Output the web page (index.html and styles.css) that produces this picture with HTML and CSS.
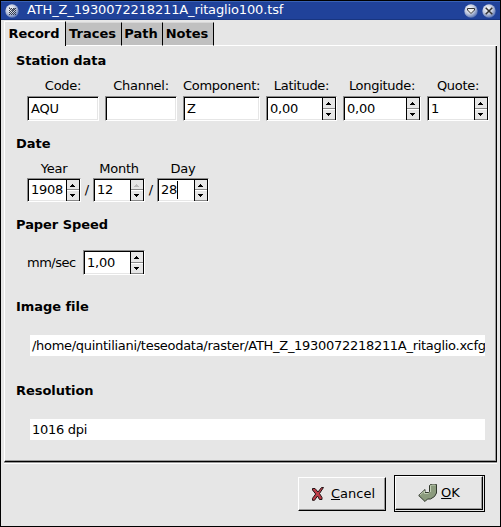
FILE: index.html
```html
<!DOCTYPE html>
<html lang="en">
<head>
<meta charset="utf-8">
<title>ATH_Z_1930072218211A_ritaglio100.tsf</title>
<link rel="stylesheet" href="styles.css">
</head>
<body>
<svg class="defs" width="0" height="0">
  <defs>
    <radialGradient id="orb" cx=".4" cy=".35" r=".65">
      <stop offset="0" stop-color="#fff"/><stop offset=".55" stop-color="#c3cbdf"/><stop offset="1" stop-color="#5f78b4"/>
    </radialGradient>
    <path id="up" d="M5 4h1v1h1v1h1v1H3V6h1V5h1z"/>
    <path id="down" d="M3 3h5v1H7v1H6v1H5V5H4V4H3z"/>
  </defs>
</svg>
<div class="window">
  <header class="titlebar">
    <svg class="orb" width="14" height="14" viewBox="0 0 14 14"><circle cx="7" cy="7" r="6.7" fill="url(#orb)"/><path d="M4 4.500h7M5 5.500h6M4 6.500h7M5 7.500h6M4 8.500h7M5 9.500h6M4 10.500h7" stroke="#333b4d" stroke-dasharray="1 1"/><path d="M4 3l3 4 3-3" fill="none" stroke="#555e70" stroke-width=".8"/></svg>
    <span class="title">ATH_Z_1930072218211A_ritaglio100.tsf</span>
    <svg class="orb" width="14" height="14" viewBox="0 0 14 14"><circle cx="7" cy="7" r="6.700" fill="url(#orb)"/><path d="M3.500 4.500h7v1.500L7 9.500 3.500 6z" fill="#eee" stroke="#333"/></svg>
    <svg class="orb" width="14" height="14" viewBox="0 0 14 14"><circle cx="7" cy="7" r="6.700" fill="url(#orb)"/><path d="M3.700 3.700l6.600 6.600M10.300 3.700l-6.600 6.600" stroke="#333" stroke-width="1.500"/></svg>
  </header>
  <nav class="tabs">
    <div class="tab active">Record</div>
    <div class="tab traces">Traces</div>
    <div class="tab path">Path</div>
    <div class="tab notes">Notes</div>
    <div class="tabs-rest"></div>
  </nav>
  <main class="panel">
    <section class="station">
      <h2>Station data</h2>
      <div class="row station-row">
        <label><span>Code:</span><div class="entry">AQU</div></label>
        <label><span>Channel:</span><div class="entry"></div></label>
        <label><span>Component:</span><div class="entry">Z</div></label>
        <label><span>Latitude:</span><div class="entry spin"><b>0,00</b><i><svg><use href="#up"/></svg><svg><use href="#down"/></svg></i></div></label>
        <label><span>Longitude:</span><div class="entry spin"><b>0,00</b><i><svg><use href="#up"/></svg><svg><use href="#down"/></svg></i></div></label>
        <label><span>Quote:</span><div class="entry spin"><b>1</b><i><svg><use href="#up"/></svg><svg><use href="#down"/></svg></i></div></label>
      </div>
    </section>
    <section class="date">
      <h2>Date</h2>
      <div class="row date-row">
        <label><span>Year</span><div class="entry spin"><b>1908</b><i><svg><use href="#up"/></svg><svg><use href="#down"/></svg></i></div></label>
        <span class="slash">/</span>
        <label><span>Month</span><div class="entry spin"><b>12</b><i><svg class="off"><use href="#up"/></svg><svg><use href="#down"/></svg></i></div></label>
        <span class="slash">/</span>
        <label><span>Day</span><div class="entry spin"><b class="caret">28</b><i><svg><use href="#up"/></svg><svg><use href="#down"/></svg></i></div></label>
      </div>
    </section>
    <section class="speed">
      <h2>Paper Speed</h2>
      <div class="speed-row"><span>mm/sec</span><div class="entry spin"><b>1,00</b><i><svg><use href="#up"/></svg><svg><use href="#down"/></svg></i></div></div>
    </section>
    <section class="file">
      <h2>Image file</h2>
      <div class="plain">/home/quintiliani/teseodata/raster/ATH_Z_1930072218211A_ritaglio.xcfg</div>
    </section>
    <section class="resolution">
      <h2>Resolution</h2>
      <div class="plain">1016 dpi</div>
    </section>
  </main>
  <footer class="actions">
    <div class="button cancel">
      <svg width="14" height="14" viewBox="0 0 14 14"><path d="M1.500 1.500h2.500l3 3.500 3.500-4.500h2L8.500 6.500l2.500 4v2H8.500L6.500 9l-3 4.300h-2v-2L4.700 7 1.500 3z" fill="#bd3d48" stroke="#221416"/></svg>
      <span><u>C</u>ancel</span>
    </div>
    <div class="default">
      <div class="button ok">
        <svg width="20" height="19" viewBox="0 0 20 19"><path d="M11.500 1.500l1-1h6V9l-2 3.500-4 2.500H9.500l-2.500 2.500L.7 11.500 7 5.500v3h3.500l1-1z" fill="#8b9b7d" stroke="#30372c"/><path d="M12.500 8V2l1-1h4M2 11l4.500-4v2.500h4" fill="none" stroke="#c0cdb3"/></svg>
        <span><u>O</u>K</span>
      </div>
    </div>
  </footer>
</div>
</body>
</html>
```

FILE: styles.css
```css
* { box-sizing: border-box; }
body { margin: 0; background: #e6e6e6; font: 13px/16px "DejaVu Sans", sans-serif; color: #000; }
.defs { position: absolute; }
.window { width: 501px; height: 527px; border: 1px solid #000; background: #e6e6e6; overflow: hidden; }
.titlebar { height: 19px; display: flex; align-items: center; gap: 4px; padding: 0 4px; background: #20429a; border-top: 1px solid #3861b5; border-bottom: 1px solid #183580; color: #fff; }
.title { flex: 1; margin: -1px 0 0 4px; white-space: nowrap; letter-spacing: -.14px; }
.orb { flex: none; }
.tabs { display: flex; height: 26px; padding: 1px 3px 0; font-weight: bold; }
.tab { height: 24px; margin-top: 1px; padding-right: 2px; background: #c0c0c0; border-top: 1px solid #d8d8d8; border-right: 1px solid #000; border-bottom: 1px solid #fff; line-height: 21px; text-align: center; white-space: nowrap; }
.tab.active { width: 62px; height: 25px; margin-top: 0; background: #e6e6e6; border: 1px solid #fff; border-right-color: #000; border-bottom: 0; line-height: 23px; }
.traces { width: 56px; }
.path { width: 41px; }
.notes { width: 51px; }
.tabs-rest { flex: 1; margin-top: 1px; height: 24px; border-bottom: 1px solid #fff; }
.panel { width: 493px; height: 416px; margin-left: 3px; border-left: 1px solid #fff; border-right: 1px solid #000; border-bottom: 1px solid #000; box-shadow: inset -1px -1px #999, 0 1px #999, 0 2px #fff; }
section { padding: 5px 10px 0 11px; }
.station { height: 83px; }
.date { height: 81px; }
.speed { height: 82px; }
.file { height: 84px; }
h2 { margin: 0; font-size: 13px; line-height: 20px; height: 20px; letter-spacing: -.05px; }
.row { display: grid; justify-content: start; margin-left: 11px; padding-top: 7px; }
.station-row { grid-template-columns: 72px 72px 77px 71px 78px 62px; column-gap: 6px; }
.date-row { grid-template-columns: 54px 12px 52px 12px 52px; align-items: end; }
.row label > span { display: block; height: 18px; line-height: 16px; text-align: center; white-space: nowrap; letter-spacing: -.28px; }
.date-row label > span { height: 17px; }
.slash { height: 24px; line-height: 24px; text-align: center; }
.entry { height: 25px; padding-left: 3px; border: 1px solid; border-color: #8c8c8c #fff #fff #8c8c8c; background: #fff; box-shadow: inset 1px 1px #000, inset -1px -1px #e6e6e6; line-height: 23px; letter-spacing: -.25px; }
.date-row .entry { height: 24px; line-height: 22px; }
.spin { display: flex; justify-content: space-between; }
.spin b { font-weight: normal; }
.spin i { width: 14px; display: flex; flex-direction: column; border: solid #000; border-width: 1px 1px 0 1px; background: #e6e6e6; }
.spin svg { width: 12px; height: 11px; fill: #000; border-bottom: 1px solid #888; flex: 1 1 0; min-height: 0; }
.spin svg + svg { border-top: 1px solid #fff; }
.spin .off { fill: #bbb; }
.spin .caret { width: 17px; border-right: 1px solid #000; height: 18px; line-height: 18px; margin: 2px auto 0 0; }
.speed-row { display: flex; align-items: center; margin-left: 11px; padding-top: 15px; }
.speed-row > span { width: 56px; letter-spacing: -.5px; }
.speed-row .entry { width: 62px; }
.plain { width: 455px; height: 21px; margin: 18px 0 0 14px; padding-left: 2px; background: #fff; line-height: 21px; letter-spacing: -.29px; white-space: nowrap; overflow: hidden; }
.actions { display: flex; justify-content: flex-end; align-items: center; gap: 8px; margin-top: 13px; padding-right: 15px; }
.button { display: flex; align-items: center; justify-content: center; height: 34px; border: 1px solid; border-color: #fff #000 #000 #fff; box-shadow: inset -1px -1px #999; }
.cancel { width: 88px; gap: 6px; padding-left: 2px; }
.default { border: 1px solid #000; padding: 0 1px 1px 0; width: 91px; height: 37px; }
.ok { width: 88px; gap: 3px; }
```
